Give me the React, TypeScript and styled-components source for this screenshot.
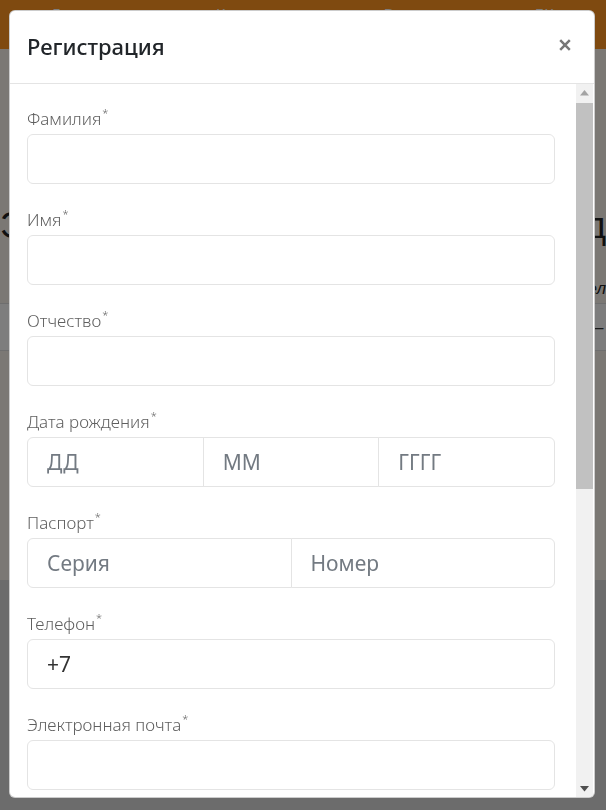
import React from "react";
import styled, { createGlobalStyle } from "styled-components";

const GlobalStyle = createGlobalStyle`
  html, body {
    margin: 0;
    padding: 0;
    height: 100%;
    overflow: hidden;
  }
  body {
    font-family: "Noto Sans", "Open Sans", Arial, sans-serif;
    background: #f6f0e8;
  }
  * {
    box-sizing: border-box;
  }
`;

const fontStack = `"Noto Sans", "Open Sans", Arial, sans-serif`;

// ---------- page behind the dialog ----------

const Page = styled.div`
  min-height: 810px;
  display: flex;
  flex-direction: column;
`;

const TopBar = styled.header`
  height: 49px;
  background: #fe9420;
  display: flex;
  justify-content: space-around;
  padding-top: 3px;
`;

const NavLink = styled.span`
  color: #fff;
  font-size: 15px;
  line-height: 20px;
`;

const Hero = styled.section`
  flex: 0 0 531px;
  background: #f6f0e8;
  display: flex;
  flex-direction: column;
  padding-top: 154px;
`;

const HeroTitle = styled.div`
  display: flex;
  justify-content: space-between;
  white-space: nowrap;
  font-family: "Liberation Sans", Arial, sans-serif;
  font-size: 36px;
  line-height: 46px;
  color: #222;
`;

const HeroLead = styled.div`
  display: flex;
  justify-content: flex-end;
  white-space: nowrap;
  font-family: "Liberation Sans", Arial, sans-serif;
  font-style: italic;
  font-size: 17px;
  line-height: 24px;
  color: #222;
  margin-top: 28px;
`;

const HeroBand = styled.div`
  height: 48px;
  background: #fbfbfb;
  border-top: 1px solid #ddd;
  border-bottom: 1px solid #ddd;
  margin-top: 2px;
  display: flex;
  justify-content: flex-end;
  align-items: center;
  padding-right: 2px;
  font-size: 14px;
  color: #333;
`;

const Footer = styled.footer`
  flex: 1;
  background: #d8d8d8;
`;

// ---------- dialog ----------

const Backdrop = styled.div`
  position: fixed;
  inset: 0;
  background: rgba(0, 0, 0, 0.5);
`;

const Dialog = styled.div`
  position: fixed;
  top: 10px;
  left: 9px;
  width: 586px;
  height: 788px;
  background: #fff;
  border: 1px solid rgba(0, 0, 0, 0.2);
  border-radius: 6px;
  display: flex;
  flex-direction: column;
  overflow: hidden;
  font-family: ${fontStack};
`;

const Header = styled.div`
  flex: 0 0 73px;
  display: flex;
  align-items: center;
  justify-content: space-between;
  padding: 0 21px 0 17px;
  border-bottom: 1px solid #e4e4e4;
`;

const Title = styled.h5`
  margin: 0 0 3px;
  font-size: 22px;
  font-weight: 500;
  color: #212529;
`;

const CloseButton = styled.button`
  border: none;
  background: none;
  padding: 0;
  margin-bottom: 4px;
  width: 16px;
  height: 16px;
  display: flex;
  align-items: center;
  justify-content: center;
  color: #777;
  cursor: pointer;
`;

const Body = styled.div`
  flex: 1;
  display: flex;
  overflow: hidden;
  padding-right: 1px;
`;

const Form = styled.form`
  flex: 1;
  padding: 25px 21px 0 17px;
`;

const Group = styled.div`
  margin-bottom: 26px;
`;

const Label = styled.label`
  display: block;
  font-size: 17px;
  line-height: 20px;
  margin-bottom: 5px;
  color: #5f5f5f;
  font-weight: 300;
`;

const Req = styled.sup`
  font-size: 11px;
  line-height: 0;
  position: relative;
  top: -1px;
  margin-left: 1px;
`;

const Row = styled.div`
  display: flex;
`;

const Input = styled.input<{ $pos?: "first" | "mid" | "last" }>`
  display: block;
  width: 100%;
  min-width: 0;
  flex: 1;
  height: 50px;
  padding: 0 19px;
  font-family: ${fontStack};
  font-size: 21px;
  color: #333;
  background: #fff;
  border: 1px solid #e4e4e4;
  border-radius: ${({ $pos }) =>
    $pos === "first" ? "6px 0 0 6px" : $pos === "mid" ? "0" : $pos === "last" ? "0 6px 6px 0" : "6px"};
  margin-left: ${({ $pos }) => ($pos === "mid" || $pos === "last" ? "-1px" : "0")};
  outline: none;

  &::placeholder {
    color: #737a82;
  }
`;

// ---------- fake scrollbar ----------

const Scrollbar = styled.div`
  flex: 0 0 17px;
  background: #f1f1f1;
  display: flex;
  flex-direction: column;
`;

const ScrollArrow = styled.div`
  flex: 0 0 17px;
  display: flex;
  align-items: center;
  justify-content: center;
`;

const ScrollTrack = styled.div`
  flex: 1;
  padding-top: 2px;
`;

const Thumb = styled.div`
  height: 386px;
  background: #c1c1c1;
`;

const Arrow = ({ down }: { down?: boolean }) => (
  <svg width="9" height="6" viewBox="0 0 9 6">
    <path d={down ? "M0 0 H9 L4.5 5.5 Z" : "M0 5.5 H9 L4.5 0 Z"} fill={down ? "#505050" : "#a3a3a3"} />
  </svg>
);

type Field = {
  label: string;
  inputs: { placeholder?: string; value?: string }[];
};

const fields: Field[] = [
  { label: "Фамилия", inputs: [{}] },
  { label: "Имя", inputs: [{}] },
  { label: "Отчество", inputs: [{}] },
  { label: "Дата рождения", inputs: [{ placeholder: "ДД" }, { placeholder: "ММ" }, { placeholder: "ГГГГ" }] },
  { label: "Паспорт", inputs: [{ placeholder: "Серия" }, { placeholder: "Номер" }] },
  { label: "Телефон", inputs: [{ value: "+7" }] },
  { label: "Электронная почта", inputs: [{}] },
];

const position = (i: number, n: number) =>
  n === 1 ? undefined : i === 0 ? "first" : i === n - 1 ? "last" : "mid";

export default function App() {
  return (
    <>
      <GlobalStyle />
      <Page>
        <TopBar>
          <NavLink>Главная</NavLink>
          <NavLink>Клиники</NavLink>
          <NavLink>Врачи</NavLink>
          <NavLink>ЛК</NavLink>
        </TopBar>
        <Hero>
          <HeroTitle>
            <span>Э</span>
            <span>Вход</span>
          </HeroTitle>
          <HeroLead>Выберите отдел</HeroLead>
          <HeroBand>—</HeroBand>
        </Hero>
        <Footer />
      </Page>
      <Backdrop />
      <Dialog role="dialog" aria-labelledby="reg-title">
        <Header>
          <Title id="reg-title">Регистрация</Title>
          <CloseButton type="button" aria-label="Закрыть">
            <svg width="12" height="12" viewBox="0 0 12 12">
              <path d="M1.2 1.2 L10.8 10.8 M10.8 1.2 L1.2 10.8" stroke="currentColor" strokeWidth="2.5" />
            </svg>
          </CloseButton>
        </Header>
        <Body>
          <Form>
            {fields.map((f) => (
              <Group key={f.label}>
                <Label>
                  {f.label}
                  <Req>*</Req>
                </Label>
                <Row>
                  {f.inputs.map((inp, i) => (
                    <Input
                      key={i}
                      $pos={position(i, f.inputs.length)}
                      placeholder={inp.placeholder}
                      defaultValue={inp.value}
                    />
                  ))}
                </Row>
              </Group>
            ))}
          </Form>
          <Scrollbar>
            <ScrollArrow>
              <Arrow />
            </ScrollArrow>
            <ScrollTrack>
              <Thumb />
            </ScrollTrack>
            <ScrollArrow>
              <Arrow down />
            </ScrollArrow>
          </Scrollbar>
        </Body>
      </Dialog>
    </>
  );
}
